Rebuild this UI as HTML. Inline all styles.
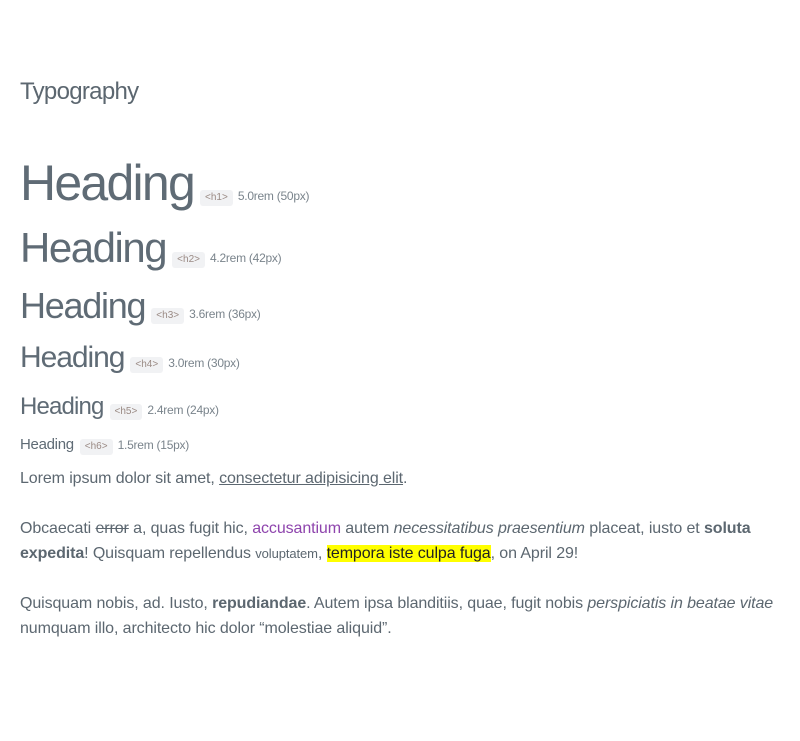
<!DOCTYPE html>
<html><head><meta charset="utf-8"><style>
body{margin:0;width:800px;height:741px;background:#fff;color:#5c6770;font-family:"Liberation Sans",sans-serif;position:relative;overflow:hidden}
.a{position:absolute;left:20px;white-space:nowrap}
.h{line-height:1;letter-spacing:-0.035em;color:#5f6b75}
.b{display:inline-block;background:#f1f2f4;color:#9a8a84;font-size:10px;letter-spacing:0;padding:2px 5px;border-radius:3px;margin-left:6px;vertical-align:baseline;line-height:12px}
.s{font-size:12px;letter-spacing:-0.25px;color:#7a848c;margin-left:5px}
p{margin:0}
.p{font-size:16px;line-height:25px;letter-spacing:-0.1px;width:770px;white-space:normal}
u{text-decoration:underline}
.m{background:#ffff00;color:#222}
</style></head><body>
<div class="a" style="top:80px;font-size:24px;line-height:1;letter-spacing:-0.7px">Typography</div>
<div class="a h" style="top:158px;font-size:50px">Heading<span class="b">&lt;h1&gt;</span><span class="s">5.0rem (50px)</span></div>
<div class="a h" style="top:227px;font-size:42px">Heading<span class="b">&lt;h2&gt;</span><span class="s">4.2rem (42px)</span></div>
<div class="a h" style="top:288px;font-size:36px">Heading<span class="b">&lt;h3&gt;</span><span class="s">3.6rem (36px)</span></div>
<div class="a h" style="top:343px;font-size:30px">Heading<span class="b">&lt;h4&gt;</span><span class="s">3.0rem (30px)</span></div>
<div class="a h" style="top:395px;font-size:24px">Heading<span class="b">&lt;h5&gt;</span><span class="s">2.4rem (24px)</span></div>
<div class="a h" style="top:437px;font-size:15px;letter-spacing:-0.3px">Heading<span class="b">&lt;h6&gt;</span><span class="s">1.5rem (15px)</span></div>
<div class="a p" style="top:466px">Lorem ipsum dolor sit amet, <u>consectetur adipisicing elit</u>.</div>
<div class="a p" style="top:516px">Obcaecati <s>error</s> a, quas fugit hic, <span style="color:#8e44ad">accusantium</span> autem <i>necessitatibus praesentium</i> placeat, iusto et <b>soluta expedita</b>! Quisquam repellendus <small style="font-size:13px">voluptatem</small>, <span class="m">tempora iste culpa fuga</span>, on April 29!</div>
<div class="a p" style="top:591px">Quisquam nobis, ad. Iusto, <b>repudiandae</b>. Autem ipsa blanditiis, quae, fugit nobis <i>perspiciatis in beatae vitae</i> numquam illo, architecto hic dolor “molestiae aliquid”.</div>
</body></html>
